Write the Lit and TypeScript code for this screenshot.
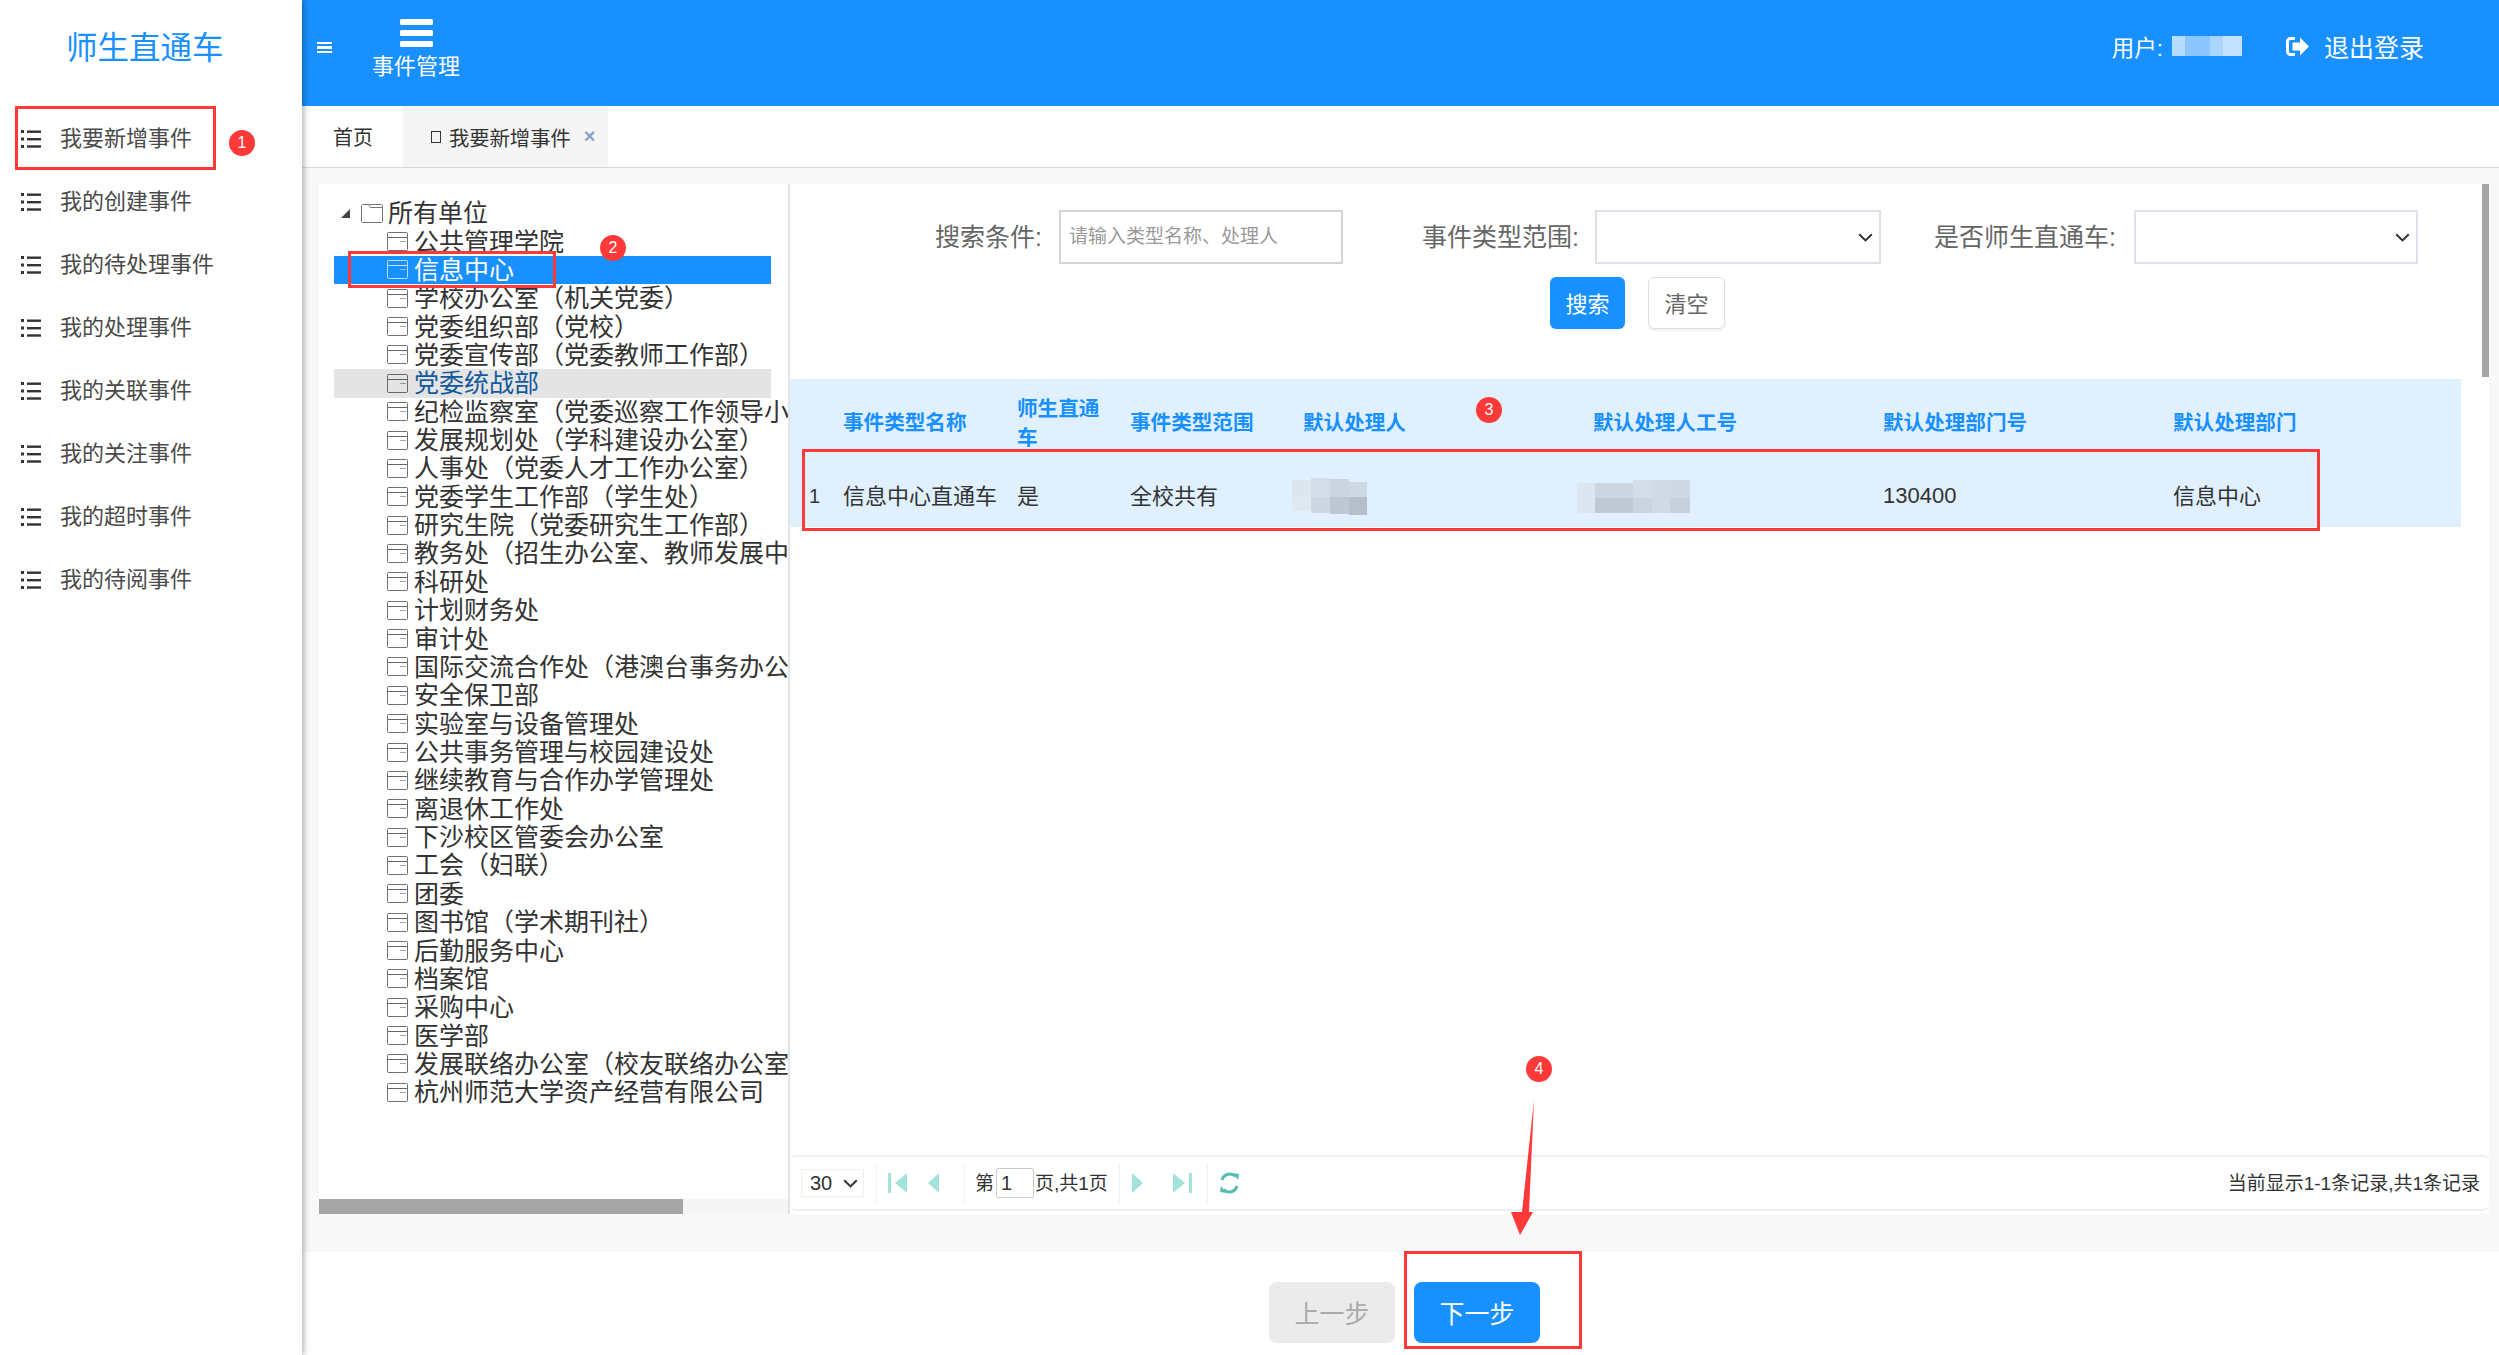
import { LitElement, html, css, svg } from "lit";
import { customElement } from "lit/decorators.js";
import { classMap } from "lit/directives/class-map.js";

const MENU = ["我要新增事件","我的创建事件","我的待处理事件","我的处理事件","我的关联事件","我的关注事件","我的超时事件","我的待阅事件"];
const UNITS = ["公共管理学院","信息中心","学校办公室（机关党委）","党委组织部（党校）","党委宣传部（党委教师工作部）","党委统战部","纪检监察室（党委巡察工作领导小组办公室）","发展规划处（学科建设办公室）","人事处（党委人才工作办公室）","党委学生工作部（学生处）","研究生院（党委研究生工作部）","教务处（招生办公室、教师发展中心）","科研处","计划财务处","审计处","国际交流合作处（港澳台事务办公室）","安全保卫部","实验室与设备管理处","公共事务管理与校园建设处","继续教育与合作办学管理处","离退休工作处","下沙校区管委会办公室","工会（妇联）","团委","图书馆（学术期刊社）","后勤服务中心","档案馆","采购中心","医学部","发展联络办公室（校友联络办公室）","杭州师范大学资产经营有限公司"];
const HEADS = ["","事件类型名称","师生直通车","事件类型范围","默认处理人","默认处理人工号","默认处理部门号","默认处理部门"];

const listIcon = html`<svg class="list-ic" width="20" height="18" viewBox="0 0 20 18"><g fill="#333"><rect x="0" y="0" width="3" height="3"/><rect x="0" y="7.5" width="3" height="3"/><rect x="0" y="15" width="3" height="3"/><rect x="6" y="0.5" width="14" height="2.4"/><rect x="6" y="8" width="14" height="2.4"/><rect x="6" y="15.3" width="14" height="2.4"/></g></svg>`;
const nodeIcon = html`<svg class="node-ic" width="21" height="19" viewBox="0 0 21 19"><path d="M1.5.5h18a1 1 0 0 1 1 1v16a1 1 0 0 1-1 1h-18a1 1 0 0 1-1-1v-16a1 1 0 0 1 1-1z" fill="none" stroke="currentColor" stroke-opacity=".7"/><path d="M1 5.5h19" stroke="currentColor" stroke-opacity=".75"/><path d="M13 9.5h6" stroke="currentColor" stroke-opacity=".45"/></svg>`;
const folderIcon = html`<svg class="folder-ic" width="22" height="19" viewBox="0 0 22 19"><path d="M.5 1.5a1 1 0 0 1 1-1h6l2 3h12v14a1 1 0 0 1-1 1h-19a1 1 0 0 1-1-1z" fill="#fff" stroke="#777"/><path d="M7.5.5h13a1 1 0 0 1 1 1v2" fill="none" stroke="#777"/></svg>`;
const chevron = (cls: string) => html`<svg class=${cls} width="15" height="9" viewBox="0 0 15 9"><path d="M1.2 1.2L7.5 7.4l6.3-6.2" fill="none" stroke="#333" stroke-width="2"/></svg>`;

const mosaicA = svg`<rect x="0" y="2" width="19" height="17" fill="#dde6ef"/><rect x="0" y="19" width="19" height="14" fill="#e0e8f1"/><rect x="19" y="0" width="19" height="19" fill="#d3dde8"/><rect x="19" y="19" width="19" height="16" fill="#cdd7e2"/><rect x="38" y="1" width="19" height="18" fill="#cad5e1"/><rect x="38" y="19" width="19" height="17" fill="#bdc8d4"/><rect x="57" y="4" width="18" height="15" fill="#cfd9e4"/><rect x="57" y="19" width="18" height="18" fill="#b4bfca"/>`;
const mosaicB = svg`<rect x="0" y="3" width="18" height="30" fill="#dce6f0"/><rect x="18" y="3" width="38" height="15" fill="#ccd7e2"/><rect x="18" y="18" width="38" height="15" fill="#bfcad6"/><rect x="56" y="0" width="19" height="18" fill="#d3dde8"/><rect x="56" y="18" width="19" height="15" fill="#c9d4df"/><rect x="75" y="0" width="18" height="33" fill="#d0dae5"/><rect x="93" y="0" width="20" height="18" fill="#ced8e3"/><rect x="93" y="18" width="20" height="15" fill="#c5d0dc"/>`;

@customElement("app-root")
export class AppRoot extends LitElement {
  static styles = css`
    :host { display: block; position: relative; width: 2499px; height: 1355px; overflow: hidden; background: #fff;
      font-family: "Liberation Sans", "Noto Sans CJK SC", sans-serif; color: #333; }
    .shell { display: grid; grid-template-columns: 302px 1fr; height: 1355px; }

    .side { position: relative; z-index: 2; background: #fff; box-shadow: 2px 0 6px rgba(0,0,0,.3); }
    .logo { height: 107px; padding-bottom: 17px; box-sizing: border-box; display: flex; align-items: center; padding-left: 66px;
      font-size: 31.5px; color: #1890ff; }
    .menu-item { height: 63px; display: flex; align-items: center; gap: 19px; padding-left: 21px; font-size: 22px; color: #4a4a4a; }
    .menu-item span { padding-bottom: 5px; }
    .list-ic { flex: none; }

    .main { display: flex; flex-direction: column; min-width: 0; }
    .top { height: 106px; background: #1890ff; color: #fff; display: flex; align-items: flex-start; padding: 0 75px 0 15px; box-sizing: border-box; flex: none; }
    .burger-s { margin-top: 42px; width: 15px; height: 11px; border-top: 2.5px solid #fff; border-bottom: 2.5px solid #fff; position: relative; box-sizing: border-box; flex: none; }
    .burger-s::after { content: ""; position: absolute; left: 0; right: 0; top: 2px; height: 2.5px; background: #fff; }
    .nav { margin-left: 40px; display: flex; flex-direction: column; align-items: center; padding-top: 19px; }
    .burger-b { width: 33px; height: 28px; display: flex; flex-direction: column; justify-content: space-between; }
    .burger-b i { display: block; height: 6px; background: #fff; border-radius: 1.5px; }
    .nav-label { font-size: 22px; line-height: 30px; margin-top: 5px; }
    .user { margin-left: auto; display: flex; align-items: center; height: 92px; font-size: 22.5px; }
    .user-name { width: 70px; height: 20px; margin-left: 9px; background: linear-gradient(90deg,#b7dcff 0 18%,#8cc6ff 18% 54%,#a9d5ff 54% 73%,#c4e2ff 73%); }
    .logout { margin-left: 44px; flex: none; }
    .logout-text { margin-left: 15px; font-size: 25px; }

    .tabs { height: 62px; flex: none; box-sizing: border-box; border-bottom: 1px solid #d8d8d8; display: flex; background: #fff; font-size: 20px; color: #333; }
    .tab { display: flex; align-items: center; box-sizing: border-box; }
    .tab-home { width: 101px; padding-left: 31px; }
    .tab-active { width: 205px; background: #f5f5f5; padding-left: 28px; font-size: 20.3px; }
    .missing { width: 10px; height: 12px; border: 1px solid #333; box-sizing: border-box; margin-right: 8px; }
    .close { margin-left: 13px; color: #8aa2c4; font-weight: bold; font-size: 20px; }

    .body { flex: 1; min-height: 0; background: #f8f8f8; padding: 16px 10px 38px 17px; display: flex; }
    .tree-pane { width: 471px; flex: none; background: #fff; display: flex; flex-direction: column; border-right: 2px solid #e4e4e4; box-sizing: border-box; }
    .tree { flex: 1; min-height: 0; overflow: hidden; padding: 15px 0 0 15px; font-size: 25px; color: #333; }
    .row { width: 437px; height: 28.37px; display: flex; align-items: center; white-space: nowrap; box-sizing: border-box; line-height: 28px; }
    .row.root { padding-left: 7px; }
    .row.leaf { padding-left: 53px; }
    .tri { width: 0; height: 0; border-style: solid; border-width: 0 0 9px 9px; border-color: transparent transparent #444 transparent; margin-right: 11px; flex: none; }
    .folder-ic { margin-right: 5px; flex: none; }
    .node-ic { margin-right: 6px; flex: none; color: #333; }
    .row.sel { background: #1890ff; color: #fff; }
    .row.sel .node-ic { color: #fff; }
    .row.hover { background: #e4e4e4; color: #14599f; }
    .hbar { height: 15px; flex: none; background: #f5f5f5; }
    .hbar i { display: block; width: 364px; height: 15px; background: #a5a5a5; }

    .work { flex: 1; min-width: 0; background: #fff; position: relative; display: flex; flex-direction: column; }
    .vbar { position: absolute; right: 0; top: 0; width: 7px; height: 193px; background: #a5a5a5; }
    .filters { display: flex; align-items: center; margin-top: 26px; padding-left: 145px; height: 54px; font-size: 25px; color: #666; flex: none; }
    .flabel { white-space: nowrap; padding-bottom: 5px; }
    .finput { width: 284px; height: 54px; box-sizing: border-box; border: 2px solid #d4d4d4; margin-left: 17px; padding: 0 8px; font: 19px "Liberation Sans", "Noto Sans CJK SC", sans-serif; color: #333; outline: none; background: #fff; }
    .finput::placeholder { color: #999; opacity: 1; }
    .sel-wrap { position: relative; height: 54px; flex: none; display: block; }
    .sel-wrap.w1 { width: 286px; margin-left: 16px; }
    .sel-wrap.w2 { width: 284px; margin-left: 18px; }
    .fsel { appearance: none; width: 100%; height: 54px; box-sizing: border-box; border: 2px solid #dfe1e8; background: #fff; font-size: 20px; display: block; border-radius: 0; }
    .chev { position: absolute; right: 8px; top: 23px; }
    .gap1 { margin-left: 79px; }
    .gap2 { margin-left: 53px; }
    .btns { display: flex; gap: 23px; padding-left: 760px; margin-top: 13px; flex: none; }
    .btn { height: 52px; box-sizing: border-box; border-radius: 6px; font-size: 22px; display: flex; align-items: center; justify-content: center; padding-bottom: 3px; }
    .btn-pri { width: 75px; background: #1890ff; color: #fff; }
    .btn-def { width: 77px; background: #fff; color: #666; border: 1.5px solid #ddd; box-shadow: 0 2px 2px #f2f2f2; }

    .table { margin-top: 50px; width: 1671px; background: #e0f0ff; flex: none; display: grid;
      grid-template-columns: 53px 174px 113px 173px 290px 290px 290px 288px; grid-template-rows: 86px 62px; }
    .th { font-size: 20.6px; font-weight: bold; color: #1890ff; line-height: 29px; align-self: center; padding-right: 20px; padding-top: 1px; }
    .td { font-size: 22px; color: #333; align-self: center; white-space: nowrap; }
    .td.cjk { padding-bottom: 5px; }
    .td.idx { padding-left: 19px; font-size: 20px; }
    .blur-a { margin-left: -11px; display: block; }
    .blur-b { display: block; margin-left: -16px; }

    .spacer { flex: 1; }
    .pager { height: 56px; flex: none; margin-bottom: 3px; box-sizing: border-box; border-top: 2px solid #eeeef5; border-bottom: 2px solid #eeeef5; border-radius: 6px;
      display: flex; align-items: center; padding: 0 9px 0 11px; font-size: 19px; color: #333; }
    .psel-wrap { position: relative; width: 63px; height: 28px; flex: none; display: block; }
    .psel { appearance: none; width: 100%; height: 28px; box-sizing: border-box; border: 1px solid #eeeef5; background: #fff; font-size: 20px; color: #333; padding-left: 8px; display: block; border-radius: 0; }
    .chev-s { position: absolute; right: 6px; top: 10px; }
    .sep { width: 1px; height: 39px; background: #eeeef5; flex: none; }
    .s1 { margin-left: 12px; }
    .p-ic { flex: none; display: block; }
    .ml11 { margin-left: 11px; }
    .ml21 { margin-left: 21px; }
    .ml25 { margin-left: 25px; }
    .ml30 { margin-left: 30px; }
    .ml15 { margin-left: 15px; }
    .ml12 { margin-left: 12px; }
    .ml10 { margin-left: 10px; }
    .ptext { white-space: nowrap; padding-bottom: 3px; }
    .ml3 { margin-left: 1px; }
    .pnum { width: 38px; height: 30px; box-sizing: border-box; border: 1px solid #ccc; border-radius: 2px; margin-left: 2px; padding: 0 4px; font: 20px "Liberation Sans", sans-serif; color: #333; outline: none; }
    .sum { margin-left: auto; white-space: nowrap; font-size: 19px; padding-bottom: 3px; }

    .foot { height: 103px; flex: none; background: #fff; padding: 30px 0 0 8px; box-sizing: border-box; display: flex; justify-content: center; gap: 19px; }
    .step { width: 126px; height: 61px; border-radius: 8px; display: flex; align-items: center; justify-content: center; font-size: 25px; padding-bottom: 2px; box-sizing: border-box; }
    .prev { background: #ebebeb; color: #aaa; }
    .next { background: #1890ff; color: #fff; }

    .marks { position: absolute; inset: 0; z-index: 5; pointer-events: none; }
    .box { position: absolute; box-sizing: border-box; border: 3px solid #ff3838; }
    .b1 { left: 15px; top: 106px; width: 201px; height: 64px; }
    .b2 { left: 348px; top: 251px; width: 208px; height: 37px; }
    .b3 { left: 802px; top: 449px; width: 1518px; height: 82px; }
    .b4 { left: 1404px; top: 1251px; width: 178px; height: 98px; }
    .dot { position: absolute; width: 26px; height: 26px; border-radius: 50%; background: #ff3838; color: #fff; font-size: 16px; display: flex; align-items: center; justify-content: center; }
    .d1 { left: 229px; top: 130px; }
    .d2 { left: 600px; top: 235px; }
    .d3 { left: 1476px; top: 397px; }
    .d4 { left: 1526px; top: 1056px; }
    .arrow { position: absolute; left: 0; top: 0; }
  `;

  render() {
    const pageIcon = (d: string, w: number, cls: string, fill = "#a4e3dc") =>
      html`<svg class="p-ic ${cls}" width=${w} height="24" viewBox="0 0 ${w} 24"><path d=${d} fill=${fill}/></svg>`;
    return html`
      <div class="shell">
        <aside class="side">
          <div class="logo">师生直通车</div>
          ${MENU.map((m) => html`<div class="menu-item">${listIcon}<span>${m}</span></div>`)}
        </aside>
        <div class="main">
          <header class="top">
            <div class="burger-s"></div>
            <div class="nav">
              <div class="burger-b"><i></i><i></i><i></i></div>
              <div class="nav-label">事件管理</div>
            </div>
            <div class="user">
              <span>用户:</span><span class="user-name"></span>
              <svg class="logout" width="23" height="19" viewBox="0 0 23 19">
                <path d="M9 1.5H4.5a3 3 0 0 0-3 3v10a3 3 0 0 0 3 3H9" fill="none" stroke="#fff" stroke-width="3"/>
                <path d="M14 0.5l9 9-9 9v-5H6.5v-8H14z" fill="#fff"/>
              </svg>
              <span class="logout-text">退出登录</span>
            </div>
          </header>
          <nav class="tabs">
            <div class="tab tab-home">首页</div>
            <div class="tab tab-active"><span class="missing"></span>我要新增事件<span class="close">×</span></div>
          </nav>
          <div class="body">
            <section class="tree-pane">
              <div class="tree">
                <div class="row root"><span class="tri"></span>${folderIcon}<span>所有单位</span></div>
                ${UNITS.map((u) => html`<div class=${classMap({ row: true, leaf: true, sel: u === "信息中心", hover: u === "党委统战部" })}>${nodeIcon}<span>${u}</span></div>`)}
              </div>
              <div class="hbar"><i></i></div>
            </section>
            <section class="work">
              <div class="vbar"></div>
              <div class="filters">
                <span class="flabel">搜索条件:</span>
                <input class="finput" placeholder="请输入类型名称、处理人" />
                <span class="flabel gap1">事件类型范围:</span>
                <span class="sel-wrap w1"><select class="fsel"><option></option></select>${chevron("chev")}</span>
                <span class="flabel gap2">是否师生直通车:</span>
                <span class="sel-wrap w2"><select class="fsel"><option></option></select>${chevron("chev")}</span>
              </div>
              <div class="btns">
                <div class="btn btn-pri">搜索</div>
                <div class="btn btn-def">清空</div>
              </div>
              <div class="table">
                ${HEADS.map((h) => html`<div class="th">${h}</div>`)}
                <div class="td idx">1</div>
                <div class="td cjk">信息中心直通车</div>
                <div class="td cjk">是</div>
                <div class="td cjk">全校共有</div>
                <div class="td"><svg class="blur-a" width="75" height="37" viewBox="0 0 75 37">${mosaicA}</svg></div>
                <div class="td"><svg class="blur-b" width="113" height="33" viewBox="0 0 113 33">${mosaicB}</svg></div>
                <div class="td">130400</div>
                <div class="td cjk">信息中心</div>
              </div>
              <div class="spacer"></div>
              <div class="pager">
                <span class="psel-wrap"><select class="psel"><option>30</option></select>${chevron("chev-s")}</span>
                <span class="sep s1"></span>
                ${pageIcon("M0 2h3v20H0zM19 2v20L7 12z", 19, "ml11")}
                ${pageIcon("M11 2v20L0 12z", 11, "ml21")}
                <span class="sep ml25"></span>
                <span class="ptext ml10">第</span>
                <input class="pnum" value="1" />
                <span class="ptext ml3">页,共1页</span>
                <span class="sep ml11"></span>
                ${pageIcon("M0 2v20l11-10z", 11, "ml12")}
                ${pageIcon("M0 2v20l12-10zM16 2h3v20h-3z", 19, "ml30")}
                <span class="sep ml15"></span>
                <svg class="p-ic ml12" width="19" height="22" viewBox="0 0 19 22">
                  <path d="M15.5 4.5A8 8 0 0 0 2 8M3.5 17.5A8 8 0 0 0 17 14" fill="none" stroke="#55bdb5" stroke-width="3"/>
                  <path d="M13 1l6 1-1 6zM6 21l-6-1 1-6z" fill="#55bdb5"/>
                </svg>
                <span class="sum">当前显示1-1条记录,共1条记录</span>
              </div>
            </section>
          </div>
          <footer class="foot">
            <div class="step prev">上一步</div>
            <div class="step next">下一步</div>
          </footer>
        </div>
      </div>
      <div class="marks">
        <div class="box b1"></div>
        <div class="box b2"></div>
        <div class="box b3"></div>
        <div class="box b4"></div>
        <div class="dot d1">1</div>
        <div class="dot d2">2</div>
        <div class="dot d3">3</div>
        <div class="dot d4">4</div>
        <svg class="arrow" width="2499" height="1355" viewBox="0 0 2499 1355"><path d="M1534 1100L1529 1212L1533 1212L1520 1235L1511 1212L1522 1212z" fill="#ff3838"/></svg>
      </div>
    `;
  }
}
